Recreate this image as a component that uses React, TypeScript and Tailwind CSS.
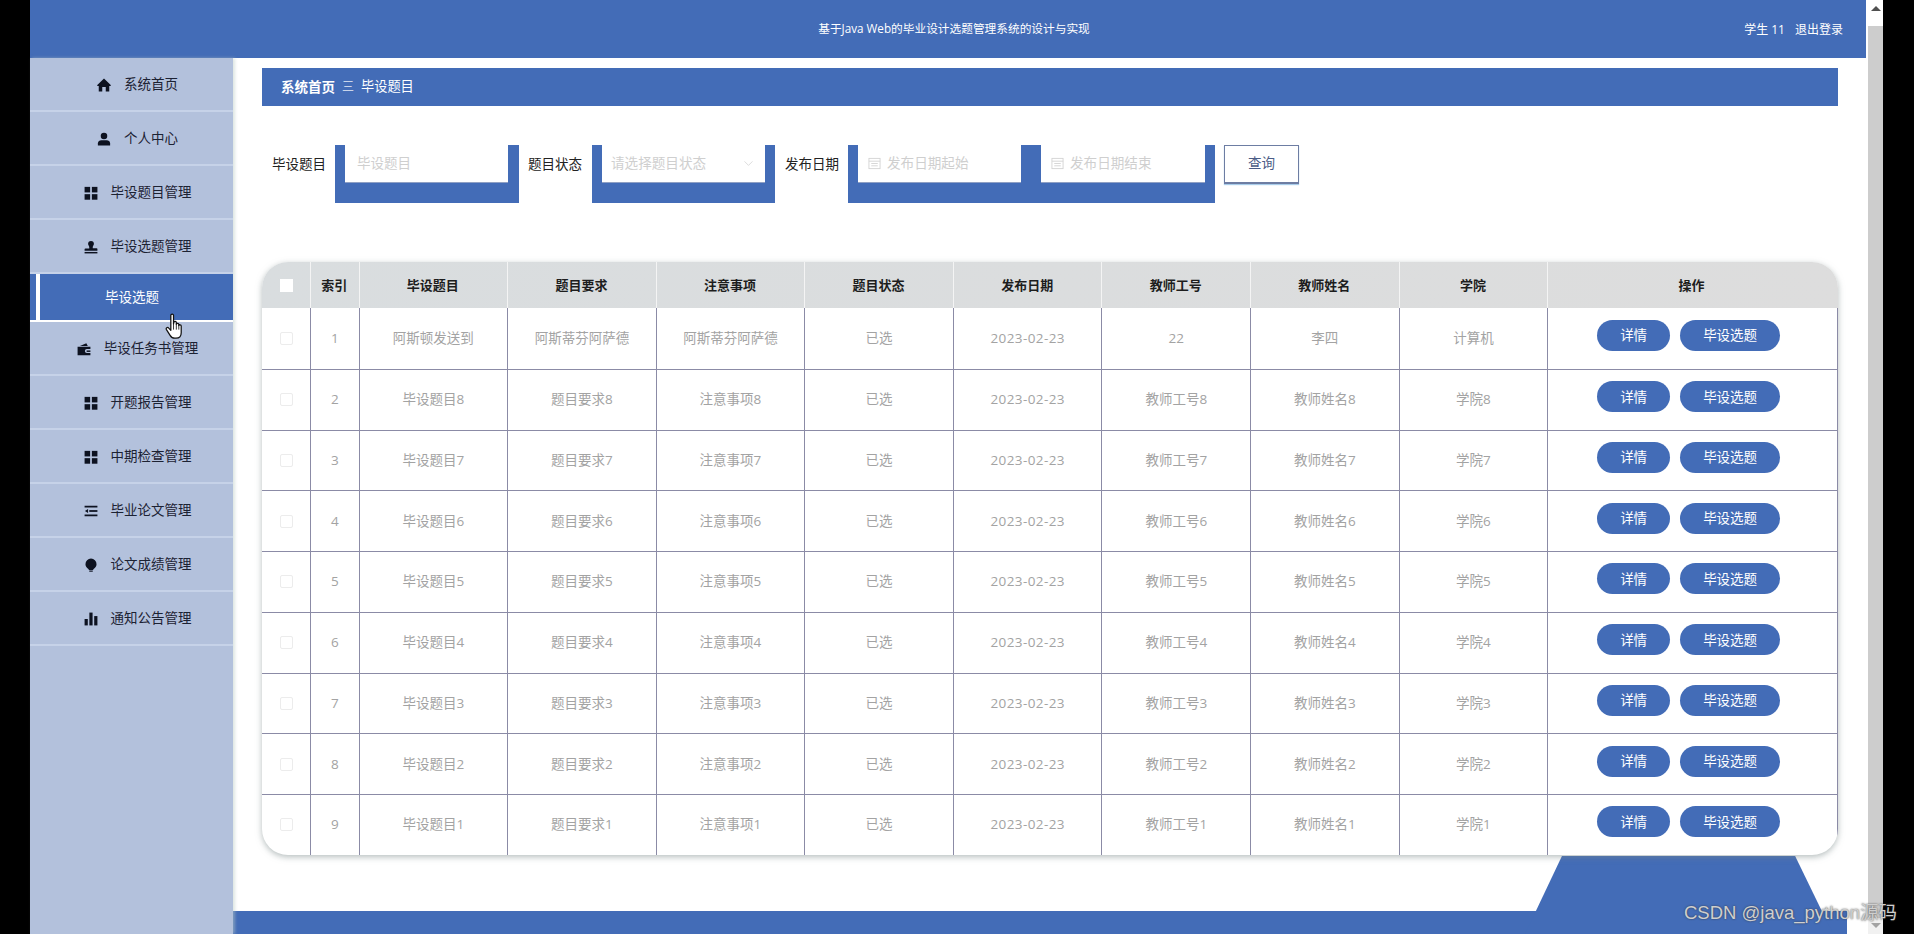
import { ReactNode } from "react";
import { ChevronDown } from "lucide-react";

const BLUE = "bg-[#436cb7]";
const COLS = "grid grid-cols-[48px_48.5px_repeat(8,148.6px)_1fr]";

const HomeIcon = () => (
  <svg viewBox="0 0 24 24" className="w-[14px] h-[14px]" fill="#0d1220">
    <path d="M12 1 23.500 12v1.500h-2.500V23h-6V15.500h-6V23h-6V13.500H.5V12Z" />
  </svg>
);
const UserIcon = () => (
  <svg viewBox="0 0 24 24" className="w-[14px] h-[14px]" fill="#0d1220">
    <circle cx="12" cy="7" r="5.6" />
    <path d="M1.500 23v-3.500c0-3.500 3-5.500 6-5.500h9c3 0 6 2 6 5.500V23Z" />
  </svg>
);
const GridIcon = () => (
  <svg viewBox="0 0 24 24" className="w-[14px] h-[14px]" fill="#0d1220">
    <rect x="1" y="1.500" width="9.500" height="9.500" />
    <rect x="13.500" y="1.500" width="9.500" height="9.500" />
    <rect x="1" y="14" width="9.500" height="9.500" />
    <rect x="13.500" y="14" width="9.500" height="9.500" />
  </svg>
);
const StampIcon = () => (
  <svg viewBox="0 0 24 24" className="w-[14px] h-[14px]" fill="#0d1220">
    <path d="M12 1.500a5 5 0 0 1 5 5c0 2.500-2 3.500-2 6v1.500h6.500a1.500 1.500 0 0 1 1.500 1.500V18.500H1V16a1.500 1.500 0 0 1 1.500-1.500H9v-2c0-2.500-2-3.500-2-6a5 5 0 0 1 5-5Z" />
    <rect x="1" y="20.500" width="22" height="2.500" />
  </svg>
);
const WalletIcon = () => (
  <svg viewBox="0 0 24 24" className="w-[14px] h-[14px]" fill="#0d1220">
    <path d="M5 7 16 2l2.500 5Z" />
    <path d="M1 8h22v4h-6a3.500 3.500 0 0 0 0 7h6v3.500H1Z" />
    <rect x="16.500" y="14.500" width="6.500" height="2.500" />
  </svg>
);
const UnfoldIcon = () => (
  <svg viewBox="0 0 24 24" className="w-[14px] h-[14px]" fill="#0d1220">
    <rect x="1" y="3" width="22" height="3" />
    <rect x="9" y="10.500" width="14" height="3" />
    <path d="M7 8.500v7L1.500 12Z" />
    <rect x="1" y="18" width="22" height="3" />
  </svg>
);
const BulbIcon = () => (
  <svg viewBox="0 0 24 24" className="w-[14px] h-[14px]" fill="#0d1220">
    <path d="M12 1a9.500 9.500 0 0 1 9.500 9.500c0 4-2.500 6-4.500 8-1 1-1.500 1.500-1.500 2h-7c0-.5-.5-1-1.500-2-2-2-4.500-4-4.500-8A9.500 9.500 0 0 1 12 1Z" />
    <rect x="9" y="21.500" width="6" height="2" />
  </svg>
);
const BarsIcon = () => (
  <svg viewBox="0 0 24 24" className="w-[14px] h-[14px]" fill="#0d1220">
    <rect x="1" y="12" width="5.500" height="11" />
    <rect x="9.200" y="1" width="5.500" height="22" />
    <rect x="17.500" y="7" width="5.500" height="16" />
  </svg>
);
const CalendarIcon = () => (
  <svg viewBox="0 0 14 14" className="w-[13px] h-[13px] shrink-0" fill="none" stroke="#d4d4d4" strokeWidth="1">
    <rect x="1" y="1.500" width="12" height="11" />
    <path d="M1 4.500h12M3.500 7h7M3.500 9.500h7" />
  </svg>
);
const HandCursor = () => (
  <svg viewBox="0 0 20 26" className="w-[21px] h-[27px]" fill="#fff" stroke="#111" strokeWidth="1.200" strokeLinejoin="round">
    <path d="M5.500 2.200c0-1.600 2.600-1.600 2.600 0v8.300l.3-1.500c.3-1.400 2.400-1.200 2.400.3v1.500c.2-1.300 2.300-1.200 2.400.3v1c.3-1.200 2.300-1 2.300.5v6.400c0 3-1.800 5.300-5 5.300H9.300c-2.200 0-3.400-1-4.500-2.800L1.300 16c-.9-1.500 1-2.900 2.200-1.500l2 2.200Z" />
    <path d="M8.100 10.500V16M10.800 10.500V16M13.200 11.500V16" strokeWidth=".8" />
  </svg>
);

const menu: { icon: ReactNode; label: string }[] = [
  { icon: <HomeIcon />, label: "系统首页" },
  { icon: <UserIcon />, label: "个人中心" },
  { icon: <GridIcon />, label: "毕设题目管理" },
  { icon: <StampIcon />, label: "毕设选题管理" },
];
const menu2: { icon: ReactNode; label: string }[] = [
  { icon: <WalletIcon />, label: "毕设任务书管理" },
  { icon: <GridIcon />, label: "开题报告管理" },
  { icon: <GridIcon />, label: "中期检查管理" },
  { icon: <UnfoldIcon />, label: "毕业论文管理" },
  { icon: <BulbIcon />, label: "论文成绩管理" },
  { icon: <BarsIcon />, label: "通知公告管理" },
];

const headers = ["索引", "毕设题目", "题目要求", "注意事项", "题目状态", "发布日期", "教师工号", "教师姓名", "学院"];

const rows = [
  ["1", "阿斯顿发送到", "阿斯蒂芬阿萨德", "阿斯蒂芬阿萨德", "已选", "2023-02-23", "22", "李四", "计算机"],
  ...[8, 7, 6, 5, 4, 3, 2, 1].map((n, i) => [
    String(i + 2),
    `毕设题目${n}`,
    `题目要求${n}`,
    `注意事项${n}`,
    "已选",
    "2023-02-23",
    `教师工号${n}`,
    `教师姓名${n}`,
    `学院${n}`,
  ]),
];

const MenuItem = ({ icon, label }: { icon: ReactNode; label: string }) => (
  <div className="h-[54px] border-b-2 border-[#c6d2e8] flex items-center justify-center gap-[13px] pl-3 pt-[1px] text-[13.5px] text-[#1c2233]">
    {icon}
    <span>{label}</span>
  </div>
);

const Label = ({ children, className }: { children: ReactNode; className: string }) => (
  <span className={`text-[13.5px] leading-[38px] text-[#222] whitespace-nowrap ${className}`}>{children}</span>
);

export default function App() {
  return (
    <div className="flex h-[934px] w-[1914px] overflow-hidden bg-black font-['Open_Sans','Noto_Sans_CJK_SC',sans-serif]">
      <div className="w-[30px] shrink-0" />

      <div className="relative w-[1838px] shrink-0 flex flex-col bg-white">
        <header className={`${BLUE} h-[58px] w-[1836px] shrink-0 flex items-center justify-center relative text-white text-[11.7px]`}>
          <span className="pl-3">基于Java Web的毕业设计选题管理系统的设计与实现</span>
          <div className="absolute right-[23px] top-[21px] flex gap-[10px] leading-[18px] text-[12px]">
            <span>学生 11</span>
            <span>退出登录</span>
          </div>
        </header>

        <div className="flex flex-1 min-h-0">
          <aside className="w-[203px] shrink-0 bg-[#b3c1dc] shadow-[2px_0_3px_rgba(190,205,200,0.5)] relative z-20">
            {menu.map((m) => (
              <MenuItem key={m.label} icon={m.icon} label={m.label} />
            ))}
            <div className="h-[48px] flex border-b-2 border-white bg-white">
              <div className={`${BLUE} w-[6px]`} />
              <div className={`${BLUE} flex-1 ml-[4px] flex items-center justify-center pr-[9px] pt-[1px] text-white text-[13.5px]`}>
                毕设选题
              </div>
            </div>
            {menu2.map((m) => (
              <MenuItem key={m.label} icon={m.icon} label={m.label} />
            ))}
            <div className="absolute left-[135px] top-[255px]">
              <HandCursor />
            </div>
          </aside>

          <main className="relative flex-1 flex flex-col">
            <div className={`${BLUE} mt-[10px] ml-[29px] w-[1576px] h-[38px] shrink-0 flex items-center pl-[19px] text-white text-[13.5px]`}>
              <span className="font-bold">系统首页</span>
              <span className="mx-[7px] text-[#c9d4ea] text-[12px]">三</span>
              <span className="text-[13.2px]">毕设题目</span>
            </div>

            <div className="mt-[39px] ml-[39px] h-[58px] flex items-start shrink-0">
              <Label className="w-[52px]">毕设题目</Label>
              <div className={`${BLUE} ml-[11px] w-[184px] h-[58px] pl-[10px] pr-[11px]`}>
                <div className="h-[38px] bg-white border-b border-[#8fa0c4] pl-[12px] flex items-center text-[13.5px] text-[#cfcfcf]">
                  毕设题目
                </div>
              </div>
              <Label className="ml-[9px] w-[55px]">题目状态</Label>
              <div className={`${BLUE} ml-[9px] w-[183px] h-[58px] pl-[10px] pr-[10px]`}>
                <div className="h-[38px] bg-white border-b border-[#8fa0c4] pl-[9px] pr-[9px] flex items-center justify-between text-[13.6px] text-[#cfcfcf]">
                  <span>请选择题目状态</span>
                  <ChevronDown size={15} strokeWidth={1} color="#c8c8c8" />
                </div>
              </div>
              <Label className="ml-[10px] w-[56px]">发布日期</Label>
              <div className={`${BLUE} ml-[7px] w-[367px] h-[58px] pl-[10px] pr-[10px] flex gap-[20px]`}>
                <div className="w-[163px] h-[38px] bg-white border-b border-[#8fa0c4] pl-[10px] flex items-center gap-[6px] text-[13.6px] text-[#cfcfcf]">
                  <CalendarIcon />
                  <span>发布日期起始</span>
                </div>
                <div className="w-[164px] h-[38px] bg-white border-b border-[#8fa0c4] pl-[10px] flex items-center gap-[6px] text-[13.6px] text-[#cfcfcf]">
                  <CalendarIcon />
                  <span>发布日期结束</span>
                </div>
              </div>
              <button className="ml-[9px] w-[75px] h-[39px] pb-[2px] bg-white border border-[#6d7da3] border-b-2 shadow-[0_1px_1px_#a9cdea] text-[13.5px] text-[#4a5c86]">
                查询
              </button>
            </div>

            <div className="relative z-10 mt-[59px] ml-[29px] w-[1576px] h-[593px] shrink-0 rounded-[26px] overflow-hidden bg-white shadow-[0_2px_6px_rgba(120,135,135,0.55)]">
              <div className={`${COLS} h-[46px] bg-linear-to-r from-[#d9dddf] to-[#dddddd] text-[13px] font-bold text-[#1d1d1d]`}>
                <div className="flex items-center justify-center">
                  <span className="w-[13px] h-[13px] bg-white" />
                </div>
                {headers.map((h) => (
                  <div key={h} className="flex items-center justify-center border-l border-[#f4f4f4] pr-[1px] pt-[1px]">
                    {h}
                  </div>
                ))}
                <div className="flex items-center justify-center border-l border-[#f4f4f4] pr-[3px] pt-[1px]">操作</div>
              </div>
              {rows.map((row, i) => (
                <div key={row[0]} className={`${COLS} h-[60.75px] text-[13.5px] text-[#a3a3a3] ${i > 0 ? "border-t border-[#8b8ba6]" : ""}`}>
                  <div className="flex items-center justify-center">
                    <span className="w-[13px] h-[13px] bg-white border border-[#ececec] rounded-[2px]" />
                  </div>
                  {row.map((c, j) => (
                    <div key={j} className={`flex items-center justify-center pb-[1px] border-l border-[#8b8ba6] ${j === 5 ? "tracking-[0.4px]" : ""}`}>
                      {c}
                    </div>
                  ))}
                  <div className="flex items-center justify-center gap-[10px] pr-[8px] pb-[6px] border-x border-[#8b8ba6] text-white text-[13.5px]">
                    <button className={`${BLUE} w-[73px] h-[31px] rounded-full`}>详情</button>
                    <button className={`${BLUE} w-[100px] h-[31px] rounded-full`}>毕设选题</button>
                  </div>
                </div>
              ))}
            </div>

            <div className={`${BLUE} absolute left-[1292px] bottom-0 w-[308px] h-[78px] [clip-path:polygon(12%_0,87.7%_0,100%_100%,0_100%)]`} />
            <div className={`${BLUE} mt-auto w-[1614px] h-[23px] shrink-0`} />
          </main>
        </div>
      </div>

      <div className="w-[15px] shrink-0 bg-[#f1f1f1] flex flex-col items-center">
        <div className="h-[26px] w-full flex justify-center pt-[6px] bg-white">
          <span className="w-0 h-0 border-x-[5px] border-x-transparent border-b-[5px] border-b-[#505050]" />
        </div>
        <div className="w-full flex-1 bg-[#cdcdcd]" />
        <div className="h-[16px] w-full flex justify-center pt-[5px]">
          <span className="w-0 h-0 border-x-[5px] border-x-transparent border-t-[5px] border-t-[#a3a3a3]" />
        </div>
      </div>
      <div className="flex-1" />

      <div className="absolute left-[1684px] top-[901px] z-30 text-[18.5px] leading-[24px] whitespace-nowrap text-[#cfcfcf] [text-shadow:0_0_2px_rgba(50,50,50,0.9)] font-['Liberation_Sans','Noto_Sans_CJK_SC',sans-serif]">
        CSDN @java_python源码
      </div>
    </div>
  );
}
